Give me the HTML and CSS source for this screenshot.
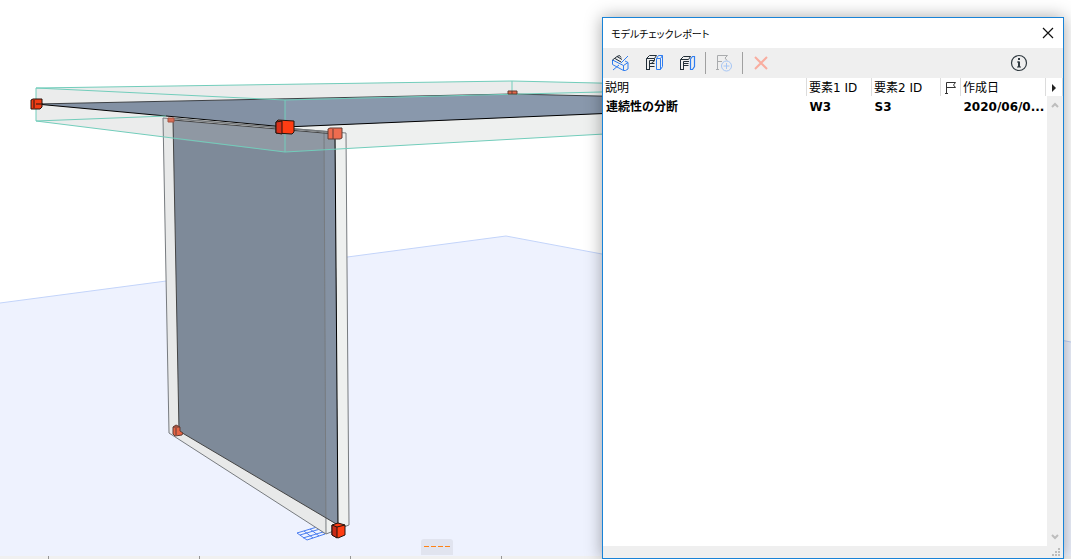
FILE: index.html
```
<!DOCTYPE html>
<html lang="ja">

<head>
    <meta charset="UTF-8">
    <meta name="viewport" content="width=device-width, initial-scale=1.0">
    <title>モデルチェックレポート</title>
    <link rel="stylesheet" href="styles.css">
</head>

<body>
    <main class="workspace">
        <svg class="scene" viewBox="0 0 1071 559" preserveAspectRatio="xMidYMid slice" aria-hidden="true">
            <!-- ground plane -->
            <path fill="#eef2fe" d="M0 303L506 236L1071 342V559H0Z" />
            <path fill="none" stroke="#c3d4fa" d="M0 303L506 236L1071 342" />

            <!-- work grid -->
            <path fill="none" stroke="#4a7df0" d="M297 533L317 527L325 534L307 540ZM304 531L313 538M310 529L319 536M300 535L320 529M303 538L323 532" />

            <!-- slab body -->
            <path fill="#ebecec" d="M36 88L512 81L640 84V132L285 152L36 121Z" />
            <path fill="#eef0ef" d="M285 100L640 91V132L285 152Z" />

            <!-- wall body -->
            <path fill="#e8e9e9" d="M163 118L346 133L349 525L326 534L169 433Z" />
            <path fill="#eef0ef" d="M324 131L346 133L349 525L326 534Z" />
            <path fill="#dbdddc" d="M163 118H173V138L163 137Z" />
            <path fill="#7e8a99" d="M173 120L335 134L338 525L179 431Z" />
            <path fill="#8592a3" d="M324 133L335 134L338 525L326 518Z" />
            <path fill="#8f98a3" d="M173 120L335 134V149L285 152L173 139Z" />
            <g fill="none" stroke="#777b7f">
                <path d="M169 433L163 118L346 133L349 525L326 534ZM324 131L326 534" />
                <path stroke="#444" d="M179 431L173 120L335 134M179 431L338 525" />
                <path stroke="#000" d="M335 134L338 525" />
            </g>

            <!-- slab core -->
            <path fill="#8391a4" d="M36 104L512 94L640 97V112L285 127Z" />
            <path fill="#8998ac" d="M285 100L640 91V112L285 127Z" />
            <path fill="#ebecec" d="M285 99L512 94L640 97V84L512 81L285 84Z" />
            <path fill="none" stroke="#3d4145" d="M36 104L512 94L640 97" />
            <path fill="none" stroke="#000" d="M36 104L285 127L640 112" />
            <path fill="none" stroke="#73777a" d="M172 118L334 133M285 128L334 132" />
            <g fill="none" stroke="#72cdbb">
                <path d="M36 88L512 81L640 84M36 88V121L285 152L640 132M36 88L285 100L640 91" />
                <path d="M285 100V152M512 81V94M36 121L166 116" />
            </g>

            <!-- node handles -->
            <g stroke="#23150f" stroke-width="1">
                <path fill="#f23c14" d="M31 100L33 99H42V107L40 109H31Z" />
                <path fill="none" d="M34 100V108M36 104H43" />
                <path fill="#ff3d13" d="M276 122L278 120L294 121V132L292 134L276 133Z" />
                <path fill="#d9301a" d="M276 122L282 121V134L276 133Z" />
                <path fill="#ff3d13" d="M332 525L338 523L345 525V535L338 538L332 535Z" />
                <path fill="#c82b18" d="M332 525L337 527V538L332 535Z" />
                <path fill="none" d="M337 527L345 525" />
            </g>
            <g stroke="#613d35">
                <path fill="#ef6c4f" d="M328 129L330 128H342V138L340 139H328Z" />
                <path fill="none" d="M333 129V139" />
                <path fill="#e46747" d="M508 91H517V94H508Z" />
                <path fill="none" d="M512 91V94" />
                <path fill="#d96c54" stroke="#a05444" d="M168 118H174V122H168Z" />
                <path fill="#e86545" d="M173 427L176 425L180 427V431L183 433L182 435L175 436L173 434Z" />
                <path fill="none" d="M176 428V435M173 427L180 427" />
            </g>
        </svg>

        <div class="ruler"></div>
        <div class="dock-tab"></div>

        <section class="palette" aria-labelledby="palette-title">
            <header class="title-bar">
                <h1 id="palette-title">モデルチェックレポート</h1>
                <button class="close" aria-label="閉じる">
                    <svg width="12" height="12" viewBox="0 0 12 12" fill="none" stroke="#111" stroke-width="1.2"><path d="M1 1L11 11M11 1L1 11" /></svg>
                </button>
            </header>

            <div class="toolbar">
                <button class="tool" aria-label="モデルチェック">
                    <svg width="18" height="18" viewBox="0 0 18 18" fill="none" stroke="#2f7df0">
                        <path d="M.5 6V10.500L11.500 16.500H13.500L16 15V8.500L13 7M.5 6L11.500 11.500V16.500M11.500 11.500L16 8.500M1 16L7 11M9 9L16 2" />
                        <path stroke="#222e38" d="M.5 6L5 2.500L10 5.500M5 2.500L7.500 1.500L9 3.500M3 4.500L9 8" />
                    </svg>
                </button>
                <button class="tool" aria-label="要素を表示">
                    <svg width="18" height="18" viewBox="0 0 18 18" fill="none" stroke="#222e38">
                        <path d="M1.500 16V4.500L4.500 1.500H11.500L9.500 4.500H1.500M4.500 16V6.500H9.500V4.500M1.500 15.500H4.500M4.500 9.500H9.500M4.500 12.500H9.500M6.500 9L9.500 7" />
                        <path stroke="#2f7df0" d="M11.500 4.500L13.500 1.500H17.500V12.500L15.500 15.500H11.500ZM15.500 15.500V4.500L17.500 1.500M11.500 4.500H15.500" />
                    </svg>
                </button>
                <button class="tool" aria-label="選択要素を表示">
                    <svg width="18" height="18" viewBox="0 0 18 18" fill="none" stroke="#222e38">
                        <path d="M2.500 16V5.500L5.500 2.500H12.500L10.500 5.500H2.500M5.500 16V7.500H11M2.500 15.500H5.500M5.500 9.500H10.500M5.500 11.500H10.500" />
                        <path stroke="#2f7df0" stroke-width="1.200" d="M12.500 5L14.500 2.500H16.500V12.500L14.500 15.500H12.500Z" />
                    </svg>
                </button>
                <span class="separator"></span>
                <button class="tool" aria-label="マーク項目を作成" disabled>
                    <svg width="18" height="18" viewBox="0 0 18 18" fill="none" stroke="#a9abad">
                        <path d="M2.500 15V1.500H12.500L10 4L12 6.500M2.500 7.500H7M1 15.500H4" />
                        <circle cx="11.500" cy="12" r="5" stroke="#a6c6f5" /><path stroke="#a6c6f5" d="M11.500 9V15M8.500 12H14.500" />
                    </svg>
                </button>
                <span class="separator"></span>
                <button class="tool" aria-label="削除" disabled>
                    <svg width="18" height="18" viewBox="0 0 18 18" fill="none" stroke="#f9ad9f" stroke-width="2"><path d="M3 3L15 15M15 3L3 15" /></svg>
                </button>
                <button class="tool info" aria-label="情報">
                    <svg width="18" height="18" viewBox="0 0 18 18" fill="none" stroke="#303a40">
                        <circle cx="9" cy="9" r="7.500" stroke-width="1.200" />
                        <path stroke-width="2" d="M9 4V6M9 7.500V13" /><path d="M7 8H9M7 13H11" />
                    </svg>
                </button>
            </div>

            <div class="list">
                <table class="report">
                    <colgroup>
                        <col>
                        <col class="col-id1">
                        <col class="col-id2">
                        <col class="col-flag">
                        <col class="col-date">
                        <col class="col-more">
                    </colgroup>
                    <thead>
                        <tr>
                            <th>説明</th>
                            <th>要素1 ID</th>
                            <th>要素2 ID</th>
                            <th aria-label="マーク">
                                <svg width="14" height="14" viewBox="0 0 14 14" fill="none" stroke="#333"><path d="M3.500 13V1.500H12.500L10.500 4L12.500 6.500H3.500M2 12.500H5" /></svg>
                            </th>
                            <th>作成日</th>
                            <th class="more">
                                <button aria-label="列を選択"><svg width="4" height="8" viewBox="0 0 4 8"><path d="M0 0L4 4L0 8Z" fill="#222" /></svg></button>
                            </th>
                        </tr>
                    </thead>
                    <tbody>
                        <tr>
                            <td>連続性の分断</td>
                            <td>W3</td>
                            <td>S3</td>
                            <td></td>
                            <td colspan="2">2020/06/0...</td>
                        </tr>
                    </tbody>
                </table>
                <div class="scrollbar">
                    <button aria-label="上へ"><svg width="8" height="6" viewBox="0 0 8 6" fill="none" stroke="#bdbdbd" stroke-width="2"><path d="M1 5L4 2L7 5" /></svg></button>
                    <button aria-label="下へ"><svg width="8" height="6" viewBox="0 0 8 6" fill="none" stroke="#bdbdbd" stroke-width="2"><path d="M1 1L4 4L7 1" /></svg></button>
                </div>
            </div>

            <footer class="grip">
                <svg width="8" height="8" viewBox="0 0 8 8" fill="#bdbdbd"><path d="M6 0h2v2h-2zM3 3h2v2h-2zM6 3h2v2h-2zM0 6h2v2h-2zM3 6h2v2h-2zM6 6h2v2h-2z" /></svg>
            </footer>
        </section>
    </main>
</body>

</html>
```
FILE: styles.css
```
* {
    box-sizing: border-box;
}

body {
    margin: 0;
    font-family: "DejaVu Sans", "Noto Sans CJK JP", sans-serif;
    font-size: 12px;
    color: #000;
    background-color: #fff;
}

button {
    display: flex;
    align-items: center;
    justify-content: center;
    padding: 0;
    border: none;
    background: none;
}

svg {
    display: block;
}

.workspace {
    position: relative;
    height: 100vh;
    overflow: hidden;
}

.scene {
    width: 100%;
    height: 100%;
}

.ruler {
    position: absolute;
    left: 0;
    right: 0;
    bottom: 0;
    height: 3px;
    background: repeating-linear-gradient(to right, transparent 0 48px, #969696 48px 49px, transparent 49px 151px), #f0f0f0;
}

.dock-tab {
    position: absolute;
    left: 421px;
    bottom: 4px;
    width: 32px;
    height: 16px;
    padding: 7px 3px;
    border-radius: 3px 3px 0 0;
    background-color: #e1e4ef;
}

.dock-tab::before {
    content: "";
    display: block;
    height: 1px;
    background: repeating-linear-gradient(to right, #ff8214 0 5px, transparent 5px 7px);
}

/* floating palette */
.palette {
    position: absolute;
    top: 17px;
    right: 7px;
    bottom: 0;
    width: 462px;
    display: flex;
    flex-direction: column;
    border: 1px solid #1883d7;
    background-color: #fff;
    box-shadow: 0 0 16px rgba(0, 0, 0, 0.35);
}

.title-bar {
    display: flex;
    align-items: center;
    justify-content: space-between;
    height: 30px;
    padding: 0 8px;
}

.title-bar h1 {
    margin: 0;
    font-family: "Noto Sans CJK JP", sans-serif;
    font-size: 10px;
    font-weight: 400;
    font-feature-settings: "palt";
}

.close {
    width: 14px;
    height: 20px;
}

.toolbar {
    display: flex;
    align-items: center;
    height: 30px;
    padding: 0 35px 0 9px;
    background-color: #efefef;
}

.tool {
    width: 18px;
    height: 24px;
}

.tool + .tool {
    margin-left: 15px;
}

.separator {
    width: 1px;
    height: 22px;
    margin: 0 9px;
    background-color: #a0a0a0;
}

.toolbar .info {
    margin-left: auto;
}

.list {
    position: relative;
    flex: 1;
}

.report {
    width: 100%;
    border-collapse: collapse;
    table-layout: fixed;
}

.col-id1 {
    width: 65px;
}

.col-id2 {
    width: 69px;
}

.col-flag {
    width: 20px;
}

.col-date {
    width: 85px;
}

.col-more {
    width: 17px;
}

.report th,
.report td {
    height: 18px;
    padding: 2px 2px 0;
    line-height: 16px;
    text-align: left;
    white-space: nowrap;
}

.report th {
    font-weight: 400;
    border-right: 1px solid #dcdcdc;
}

.report td {
    height: 20px;
    padding: 2px 3px 0;
    font-weight: 700;
}

.more button {
    width: 12px;
    height: 14px;
}

.scrollbar {
    position: absolute;
    top: 18px;
    right: 0;
    bottom: 0;
    width: 16px;
    display: flex;
    flex-direction: column;
    justify-content: space-between;
    background-color: #efefef;
}

.scrollbar button {
    height: 18px;
}

.grip {
    display: flex;
    align-items: flex-end;
    justify-content: flex-end;
    height: 12px;
    padding: 2px 3px;
    background-color: #efefef;
}
```
